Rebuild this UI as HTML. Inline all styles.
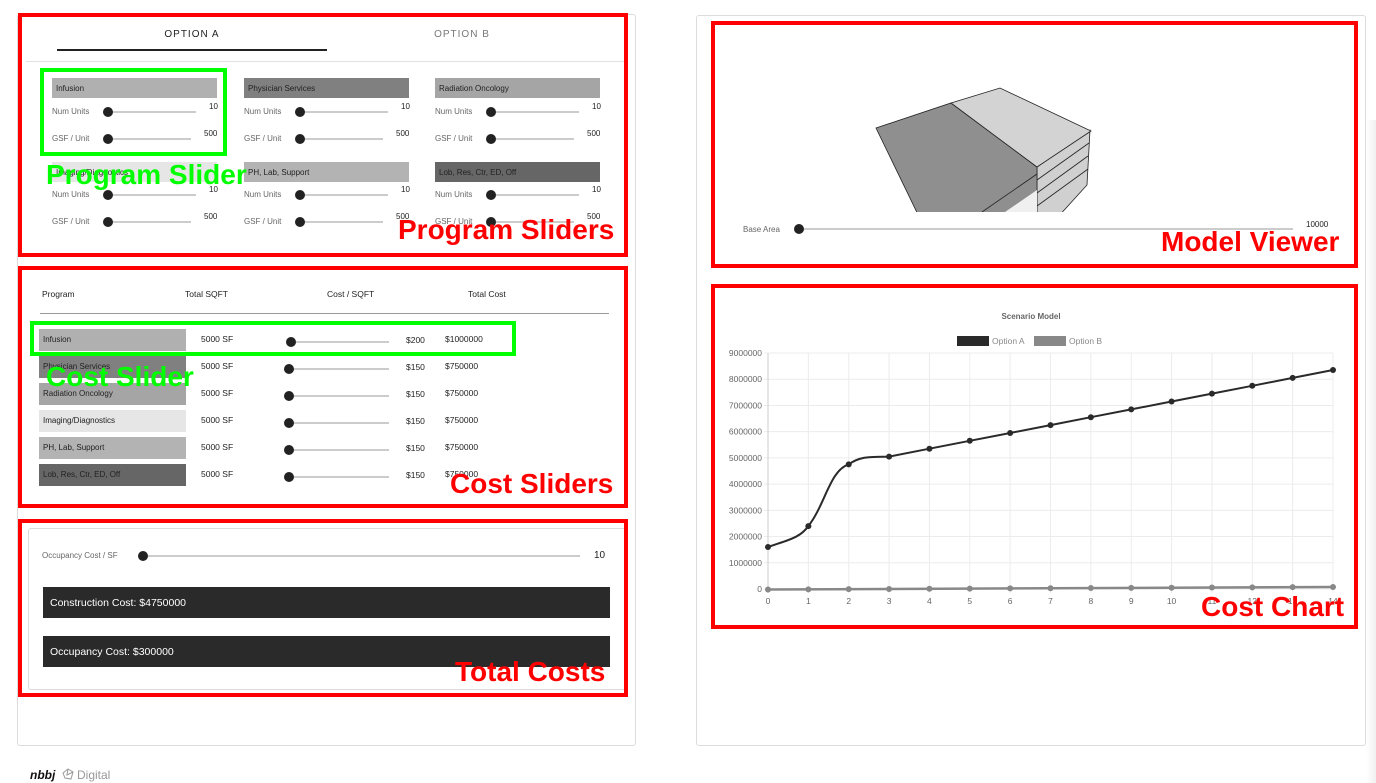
<!DOCTYPE html>
<html><head><meta charset="utf-8"><style>
*{margin:0;padding:0;box-sizing:border-box}
body{width:1376px;height:783px;background:#fff;position:relative;overflow:hidden;font-family:"Liberation Sans",sans-serif;color:#222}
.a{position:absolute}
.card{position:absolute;border:1px solid #dcdcdc;border-radius:3px;background:#fff}
.red{position:absolute;border:4px solid #f00}
.grn{position:absolute;border:4px solid #0f0}
.lbl{position:absolute;font-size:8px;color:#666;white-space:nowrap}
.val{position:absolute;font-size:8px;color:#222}
.trk{position:absolute;height:2px;background:#ccc}
.th{position:absolute;width:10px;height:10px;border-radius:50%;background:#222}
.hd{position:absolute;height:20px;width:165px;font-size:8px;color:#222;padding:6px 0 0 4px;white-space:nowrap}
.big{position:absolute;font-weight:bold;font-size:28px;white-space:nowrap;line-height:1}
.r{color:#f00}.g{color:#0f0}
.t9{position:absolute;font-size:8.5px;color:#222;white-space:nowrap}
.bar{position:absolute;left:43px;width:567px;height:31px;background:#2a2a2a;color:#fff;font-size:10.5px;padding:10px 0 0 7px}
</style></head><body>
<div class="a" style="left:1366px;top:120px;width:10px;height:663px;background:linear-gradient(90deg,#fff,#f0f0f0)"></div>

<div class="card" style="left:17px;top:14px;width:619px;height:732px"></div>
<div class="card" style="left:696px;top:15px;width:670px;height:731px"></div>

<div class="a" style="left:57px;top:29px;width:270px;text-align:center;font-size:10px;letter-spacing:1px;color:#222">OPTION A</div>
<div class="a" style="left:327px;top:29px;width:270px;text-align:center;font-size:10px;letter-spacing:1px;color:#777">OPTION B</div>
<div class="a" style="left:57px;top:49px;width:270px;height:2px;background:#222"></div>
<div class="a" style="left:26px;top:61px;width:600px;height:1px;background:#e2e2e2"></div>

<div class="hd" style="left:52px;top:78px;background:#b0b0b0">Infusion</div>
<div class="hd" style="left:244px;top:78px;background:#808080">Physician Services</div>
<div class="hd" style="left:435px;top:78px;background:#a5a5a5">Radiation Oncology</div>
<div class="hd" style="left:52px;top:162px;background:#e6e6e6">Imaging/Diagnostics</div>
<div class="hd" style="left:244px;top:162px;background:#b3b3b3">PH, Lab, Support</div>
<div class="hd" style="left:435px;top:162px;background:#666">Lob, Res, Ctr, ED, Off</div>

<div id="ps"></div>

<div class="grn" style="left:40px;top:68px;width:187px;height:88px"></div>
<div class="big g" style="left:46px;top:161px">Program Slider</div>
<div class="red" style="left:18px;top:13px;width:610px;height:244px"></div>
<div class="big r" style="left:398px;top:216px">Program Sliders</div>

<div class="t9" style="left:42px;top:289px">Program</div>
<div class="t9" style="left:185px;top:289px">Total SQFT</div>
<div class="t9" style="left:327px;top:289px">Cost / SQFT</div>
<div class="t9" style="left:468px;top:289px">Total Cost</div>
<div class="a" style="left:40px;top:313px;width:569px;height:1px;background:#999"></div>
<div id="cs"></div>
<div class="grn" style="left:30px;top:321px;width:486px;height:35px"></div>
<div class="big g" style="left:46px;top:363px">Cost Slider</div>
<div class="red" style="left:18px;top:266px;width:610px;height:242px"></div>
<div class="big r" style="left:450px;top:470px">Cost Sliders</div>

<div class="card" style="left:28px;top:528px;width:600px;height:162px;border-right:none"></div>
<div class="lbl" style="left:42px;top:551px">Occupancy Cost / SF</div>
<div class="trk" style="left:143px;top:555px;width:437px"></div>
<div class="th" style="left:138px;top:551px"></div>
<div class="val" style="left:594px;top:550px;font-size:10px">10</div>
<div class="bar" style="top:587px">Construction Cost: $4750000</div>
<div class="bar" style="top:636px">Occupancy Cost: $300000</div>
<div class="red" style="left:18px;top:519px;width:610px;height:178px"></div>
<div class="big r" style="left:455px;top:658px">Total Costs</div>

<svg class="a" style="left:0;top:0" width="1376" height="783">
<defs><clipPath id="cp"><rect x="700" y="20" width="660" height="192"/></clipPath></defs>
<g clip-path="url(#cp)" stroke="#222" stroke-width="0.8">
<polygon points="1037,167 1090,130 1087,185 1037,240" fill="#d0d0d0"/>
<line x1="1037" y1="180" x2="1089" y2="143"/><line x1="1037" y1="193" x2="1088" y2="156"/><line x1="1037" y1="206" x2="1088" y2="169"/>
<polygon points="876,128 951,103 1037,167 1037,260 940,260" fill="#8f8f8f"/>
<polygon points="951,103 1000,88 1091,131 1037,167" fill="#d3d3d3"/>
<polygon points="1005,212 1037,190 1037,212" fill="#f0f0f0" stroke="none"/>
<line x1="982" y1="212" x2="1037" y2="174"/>
</g>
<text x="743" y="232" font-size="8" fill="#666" font-family="Liberation Sans">Base Area</text>
<rect x="799" y="228" width="494" height="2" fill="#ccc"/>
<circle cx="799" cy="229" r="5" fill="#222"/>
<text x="1306" y="227" font-size="8" fill="#222" font-family="Liberation Sans">10000</text>

<g font-family="Liberation Sans">
<text x="1031" y="319" font-size="8" font-weight="bold" fill="#666" text-anchor="middle">Scenario Model</text>
<rect x="957" y="336" width="32" height="10" fill="#2a2a2a"/>
<text x="992" y="344" font-size="8.5" fill="#888">Option A</text>
<rect x="1034" y="336" width="32" height="10" fill="#888"/>
<text x="1069" y="344" font-size="8.5" fill="#888">Option B</text>
<g stroke="#ececec" stroke-width="1" id="grid"></g>
<g id="axes" font-size="8.5" fill="#666"></g>
<path d="M768,547 C788,540 800,538 808.4,526 C825,505 830,470 848.7,464.4 C860,456 870,457 889.1,456.6 L929.4,448.7 L969.8,440.8 L1010.2,433 L1050.5,425.1 L1090.9,417.2 L1131.2,409.4 L1171.6,401.5 L1212,393.6 L1252.3,385.8 L1292.7,377.9 L1333,370" fill="none" stroke="#2a2a2a" stroke-width="2"/>
<path d="M768,589.5 L1333,587" fill="none" stroke="#888" stroke-width="2.5"/>
<g id="dots"></g>
</g>
</svg>
<div class="red" style="left:711px;top:21px;width:647px;height:247px"></div>
<div class="big r" style="left:1161px;top:228px">Model Viewer</div>
<div class="red" style="left:711px;top:284px;width:647px;height:345px"></div>
<div class="big r" style="left:1201px;top:593px">Cost Chart</div>

<div class="a" style="left:30px;top:768px;font-size:12px;font-weight:bold;font-style:italic;color:#111">nbbj</div>
<svg class="a" style="left:62px;top:768px" width="12" height="12"><path d="M6,1 L11,4 L9,11 L3,10 L1,5 Z M6,1 L5,7 L11,4" fill="none" stroke="#999" stroke-width="1"/></svg>
<div class="a" style="left:77px;top:768px;font-size:12px;color:#999">Digital</div>

<script>
var ps='',cols=[52,244,435],rows=[[112,139],[195,222]];
rows.forEach(function(r){cols.forEach(function(c){
 ps+='<div class="lbl" style="left:'+c+'px;top:'+(r[0]-5)+'px">Num Units</div><div class="trk" style="left:'+(c+55)+'px;top:'+(r[0]-1)+'px;width:89px"></div><div class="th" style="left:'+(c+51)+'px;top:'+(r[0]-5)+'px"></div><div class="val" style="left:'+(c+157)+'px;top:'+(r[0]-10)+'px">10</div>';
 ps+='<div class="lbl" style="left:'+c+'px;top:'+(r[1]-5)+'px">GSF / Unit</div><div class="trk" style="left:'+(c+55)+'px;top:'+(r[1]-1)+'px;width:84px"></div><div class="th" style="left:'+(c+51)+'px;top:'+(r[1]-5)+'px"></div><div class="val" style="left:'+(c+152)+'px;top:'+(r[1]-10)+'px">500</div>';
});});
document.getElementById('ps').outerHTML=ps;
var cs='',names=[['Infusion','#b0b0b0','$200','$1000000'],['Physician Services','#808080','$150','$750000'],['Radiation Oncology','#a5a5a5','$150','$750000'],['Imaging/Diagnostics','#e6e6e6','$150','$750000'],['PH, Lab, Support','#b3b3b3','$150','$750000'],['Lob, Res, Ctr, ED, Off','#666','$150','$750000']];
names.forEach(function(n,i){var y=329+i*27;
 cs+='<div class="hd" style="left:39px;top:'+y+'px;width:147px;height:22px;padding-top:6px;background:'+n[1]+'">'+n[0]+'</div><div class="t9" style="left:201px;top:'+(y+5)+'px">5000 SF</div><div class="trk" style="left:289px;top:'+(y+12)+'px;width:100px"></div><div class="th" style="left:'+(i?284:286)+'px;top:'+(y+8)+'px"></div><div class="t9" style="left:406px;top:'+(y+6)+'px">'+n[2]+'</div><div class="t9" style="left:445px;top:'+(y+5)+'px">'+n[3]+'</div>';});
document.getElementById('cs').outerHTML=cs;
var NS='http://www.w3.org/2000/svg',g=document.getElementById('grid'),ax=document.getElementById('axes'),d=document.getElementById('dots');
function el(p,t,a,txt){var e=document.createElementNS(NS,t);for(var k in a)e.setAttribute(k,a[k]);if(txt!=null)e.textContent=txt;p.appendChild(e);}
for(var i=0;i<=9;i++){var y=589-i*236/9;el(g,'line',{x1:764,x2:1333,y1:y,y2:y});el(ax,'text',{x:762,y:y+3,'text-anchor':'end'},i?i*1000000:0);}
var A=[547,526.1,464.4,456.6,448.7,440.8,433,425.1,417.2,409.4,401.5,393.6,385.8,377.9,370];
for(var i=0;i<=14;i++){var x=768+i*565/14;el(g,'line',{x1:x,x2:x,y1:353,y2:593});el(ax,'text',{x:x,y:604,'text-anchor':'middle'},i);
 el(d,'circle',{cx:x,cy:A[i],r:3,fill:'#2a2a2a'});el(d,'circle',{cx:x,cy:589.5-i*0.18,r:3,fill:'#888'});}
el(g,'line',{x1:768,x2:768,y1:353,y2:593,stroke:'#ccc'});
</script>
</body></html>
